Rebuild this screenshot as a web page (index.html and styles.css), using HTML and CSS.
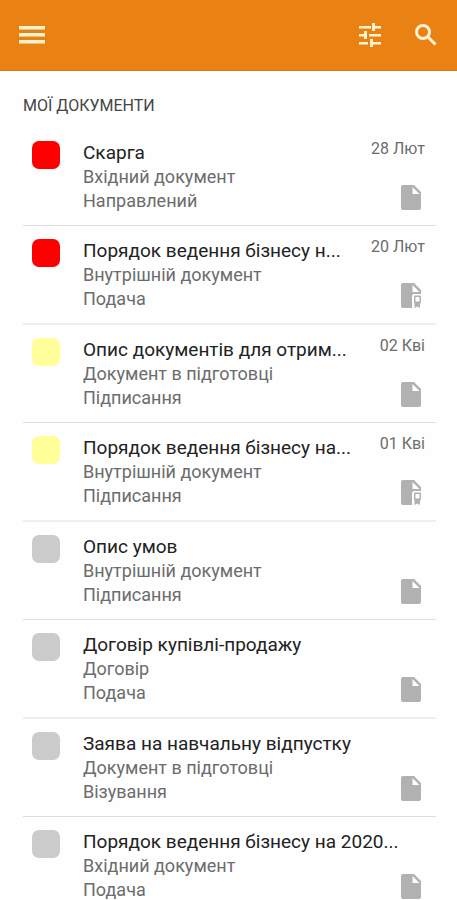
FILE: index.html
```html
<!DOCTYPE html>
<html lang="uk">
<head>
<meta charset="utf-8">
<meta name="viewport" content="width=device-width, initial-scale=1">
<title>Мої документи</title>
<link rel="stylesheet" href="styles.css">
</head>
<body>
<svg class="sprite" aria-hidden="true">
  <symbol id="doc" viewBox="0 0 20 25">
    <path fill-rule="evenodd" d="M2 0h11l7 7v16a2 2 0 0 1-2 2H2a2 2 0 0 1-2-2V2a2 2 0 0 1 2-2zM11.500 2v7h7z"/>
  </symbol>
  <symbol id="doc-signed" viewBox="0 0 20 25">
    <path fill-rule="evenodd" d="M2 0h11l7 7v4h-7a2 2 0 0 0-2 2v12H2a2 2 0 0 1-2-2V2a2 2 0 0 1 2-2zM11.500 2v7h7z"/>
    <path fill-rule="evenodd" d="M14 12.500h5a1 1 0 0 1 1 1v6l-1 1V25l-2.500-1.500L13.500 25v-4.500l-.5-1v-6a1 1 0 0 1 1-1zM14.500 14v4.500h4V14z"/>
  </symbol>
</svg>
<header class="bar">
  <button class="bar-button" aria-label="Меню">
    <svg width="26" height="18" viewBox="0 0 26 18"><path d="M0 0h26v3.500H0zM0 7h26v3.500H0zM0 14h26v3.500H0z"/></svg>
  </button>
  <div class="bar-actions">
    <button class="bar-button" aria-label="Фільтр">
      <svg width="22" height="24" viewBox="0 0 22 24"><path d="M0 3h12v2.500H0zM13 0h3v3h6v2.500h-6V8h-3zM0 11h5V8h3v8H5v-2.500H0zM10 11h12v2.500H10zM0 19h9v2.500H0zM11 16h3v3h8v2.500h-8V24h-3z"/></svg>
    </button>
    <button class="bar-button" aria-label="Пошук">
      <svg class="search" width="22" height="22" viewBox="0 0 22 22"><circle cx="8" cy="8" r="6.500"/><path d="M13 13l7.500 7.500"/></svg>
    </button>
  </div>
</header>
<main class="content">
  <h1 class="heading">МОЇ ДОКУМЕНТИ</h1>
  <ul class="list">
    <li class="item">
      <span class="mark mark-red"></span>
      <div class="info">
        <div class="line"><h2 class="title">Скарга</h2><time class="date">28 Лют</time></div>
        <p class="detail">Вхідний документ</p>
        <div class="line"><p class="detail">Направлений</p><svg class="file"><use href="#doc"/></svg></div>
      </div>
    </li>
    <li class="item">
      <span class="mark mark-red"></span>
      <div class="info">
        <div class="line"><h2 class="title">Порядок ведення бізнесу н...</h2><time class="date">20 Лют</time></div>
        <p class="detail">Внутрішній документ</p>
        <div class="line"><p class="detail">Подача</p><svg class="file"><use href="#doc-signed"/></svg></div>
      </div>
    </li>
    <li class="item">
      <span class="mark mark-yellow"></span>
      <div class="info">
        <div class="line"><h2 class="title">Опис документів для отрим...</h2><time class="date">02 Кві</time></div>
        <p class="detail">Документ в підготовці</p>
        <div class="line"><p class="detail">Підписання</p><svg class="file"><use href="#doc"/></svg></div>
      </div>
    </li>
    <li class="item">
      <span class="mark mark-yellow"></span>
      <div class="info">
        <div class="line"><h2 class="title">Порядок ведення бізнесу на...</h2><time class="date">01 Кві</time></div>
        <p class="detail">Внутрішній документ</p>
        <div class="line"><p class="detail">Підписання</p><svg class="file"><use href="#doc-signed"/></svg></div>
      </div>
    </li>
    <li class="item">
      <span class="mark"></span>
      <div class="info">
        <div class="line"><h2 class="title">Опис умов</h2></div>
        <p class="detail">Внутрішній документ</p>
        <div class="line"><p class="detail">Підписання</p><svg class="file"><use href="#doc"/></svg></div>
      </div>
    </li>
    <li class="item">
      <span class="mark"></span>
      <div class="info">
        <div class="line"><h2 class="title">Договір купівлі-продажу</h2></div>
        <p class="detail">Договір</p>
        <div class="line"><p class="detail">Подача</p><svg class="file"><use href="#doc"/></svg></div>
      </div>
    </li>
    <li class="item">
      <span class="mark"></span>
      <div class="info">
        <div class="line"><h2 class="title">Заява на навчальну відпустку</h2></div>
        <p class="detail">Документ в підготовці</p>
        <div class="line"><p class="detail">Візування</p><svg class="file"><use href="#doc"/></svg></div>
      </div>
    </li>
    <li class="item">
      <span class="mark"></span>
      <div class="info">
        <div class="line"><h2 class="title">Порядок ведення бізнесу на 2020...</h2></div>
        <p class="detail">Вхідний документ</p>
        <div class="line"><p class="detail">Подача</p><svg class="file"><use href="#doc"/></svg></div>
      </div>
    </li>
  </ul>
</main>
</body>
</html>
```
FILE: styles.css
```css
* {
  box-sizing: border-box;
  margin: 0;
  padding: 0;
}

body {
  display: flex;
  flex-direction: column;
  height: 100vh;
  background: #fefefe;
  color: #222;
  font-family: Roboto, "Noto Sans", sans-serif;
}

.sprite {
  display: none;
}

.bar {
  display: flex;
  flex: none;
  align-items: center;
  justify-content: space-between;
  height: 71px;
  padding: 0 20px 0 19px;
  background: #e98212;
  border-bottom: 1px solid #cf7a1c;
}

.bar-actions {
  display: flex;
  align-items: center;
  gap: 34px;
}

.bar-button {
  display: flex;
  border: 0;
  background: none;
  cursor: pointer;
}

.bar-button svg {
  fill: #fff3d2;
}

.bar-button .search {
  fill: none;
  stroke: #fff3d2;
  stroke-width: 3;
}

.content {
  flex: 1;
  min-height: 0;
  padding: 25px 21px 0 23px;
  overflow-y: auto;
  scrollbar-width: none;
}

.heading {
  font-size: 16px;
  font-weight: 400;
  line-height: 20px;
  color: #444;
}

.list {
  padding-top: 12px;
  list-style: none;
}

.item {
  display: flex;
  gap: 23px;
  padding: 13px 11px 12px 9px;
  border-bottom: 1px solid #dedede;
}

.item:nth-child(even) {
  border-bottom: 2px solid #eee;
}

.mark {
  flex: none;
  width: 28px;
  height: 28px;
  border-radius: 7px;
  background: #cbcbcb;
}

.mark-red {
  background: #fe0000;
}

.mark-yellow {
  background: #fffe99;
}

.info {
  flex: 1;
  min-width: 0;
}

.line {
  display: flex;
  justify-content: space-between;
  height: 24px;
}

.title {
  font-size: 19px;
  font-weight: 400;
  line-height: 24px;
  white-space: nowrap;
}

.detail {
  font-size: 18px;
  line-height: 24px;
  color: #6c6c6c;
  white-space: nowrap;
}

.date {
  font-size: 16px;
  line-height: 16px;
  color: #6c6c6c;
  white-space: nowrap;
}

.file {
  flex: none;
  width: 20px;
  height: 25px;
  margin: -4px 4px 0 0;
  fill: #b1b1b1;
}
```
